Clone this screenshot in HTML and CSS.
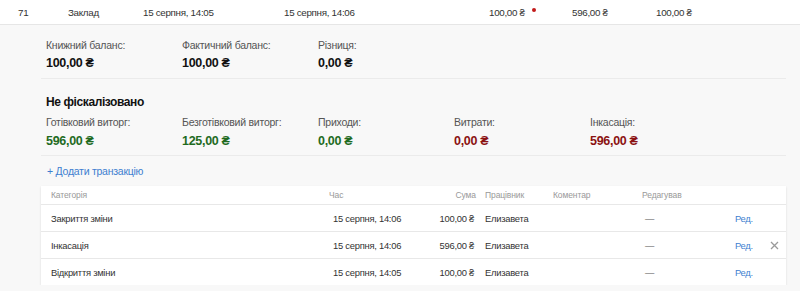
FILE: index.html
```html
<!DOCTYPE html>
<html lang="uk">
<head>
<meta charset="utf-8">
<link rel="stylesheet" href="styles.css">
</head>
<body>
<div class="toprow">
  <span class="c-id">71</span>
  <span class="c-place">Заклад</span>
  <span class="c-d1">15 серпня, 14:05</span>
  <span class="c-d2">15 серпня, 14:06</span>
  <span class="c-s1">100,00 ₴<i class="dot"></i></span>
  <span class="c-s2">596,00 ₴</span>
  <span class="c-s3">100,00 ₴</span>
</div>
<div class="details">
  <div class="stats first">
    <div class="stat"><div class="label">Книжний баланс:</div><div class="value">100,00 ₴</div></div>
    <div class="stat"><div class="label">Фактичний баланс:</div><div class="value">100,00 ₴</div></div>
    <div class="stat"><div class="label">Різниця:</div><div class="value">0,00 ₴</div></div>
  </div>
  <div class="stats second">
    <div class="heading">Не фіскалізовано</div>
    <div class="row">
      <div class="stat"><div class="label">Готівковий виторг:</div><div class="value green">596,00 ₴</div></div>
      <div class="stat"><div class="label">Безготівковий виторг:</div><div class="value green">125,00 ₴</div></div>
      <div class="stat"><div class="label">Приходи:</div><div class="value green">0,00 ₴</div></div>
      <div class="stat"><div class="label">Витрати:</div><div class="value red">0,00 ₴</div></div>
      <div class="stat"><div class="label">Інкасація:</div><div class="value red">596,00 ₴</div></div>
    </div>
  </div>
  <div class="add">+ Додати транзакцію</div>
  <div class="table">
    <div class="tr th">
      <div class="cat">Категорія</div>
      <div class="time">Час</div>
      <div class="sum">Сума</div>
      <div class="worker">Працівник</div>
      <div class="comment">Коментар</div>
      <div class="edited">Редагував</div>
      <div class="edit"></div>
      <div class="close"></div>
    </div>
    <div class="tr">
      <div class="cat">Закриття зміни</div>
      <div class="time">15 серпня, 14:06</div>
      <div class="sum">100,00 ₴</div>
      <div class="worker">Елизавета</div>
      <div class="comment"></div>
      <div class="edited">—</div>
      <div class="edit">Ред.</div>
      <div class="close"></div>
    </div>
    <div class="tr">
      <div class="cat">Інкасація</div>
      <div class="time">15 серпня, 14:06</div>
      <div class="sum">596,00 ₴</div>
      <div class="worker">Елизавета</div>
      <div class="comment"></div>
      <div class="edited">—</div>
      <div class="edit">Ред.</div>
      <div class="close"><svg width="9" height="9" viewBox="0 0 9 9"><path d="M1 1L8 8M8 1L1 8" stroke="#9a9a9a" stroke-width="1.3"/></svg></div>
    </div>
    <div class="tr">
      <div class="cat">Відкриття зміни</div>
      <div class="time">15 серпня, 14:05</div>
      <div class="sum">100,00 ₴</div>
      <div class="worker">Елизавета</div>
      <div class="comment"></div>
      <div class="edited">—</div>
      <div class="edit">Ред.</div>
      <div class="close"></div>
    </div>
  </div>
</div>
</body>
</html>
```
FILE: styles.css
```css
* { box-sizing: border-box; }
body {
  margin: 0;
  background: #f8f8f8;
  font-family: "Liberation Sans", Arial, sans-serif;
  color: #222;
}
.toprow {
  display: flex;
  align-items: center;
  height: 25px;
  padding-left: 18px;
  background: #fff;
  border-bottom: 1px solid #e6e6e6;
  font-size: 9.8px;
  letter-spacing: -0.3px;
  color: #333;
}
.toprow span { display: block; white-space: nowrap; }
.c-id { width: 50px; }
.c-place { width: 75px; }
.c-d1 { width: 141px; }
.c-d2 { width: 205px; }
.c-s1 { width: 83px; display: flex !important; align-items: center; }
.c-s2 { width: 84px; }
.dot {
  display: inline-block;
  width: 4px;
  height: 4px;
  border-radius: 50%;
  background: #c21a1a;
  margin-left: 7px;
  position: relative;
  top: -2px;
}
.details { padding: 0 14px 0 41px; }
.stats {
  border-bottom: 1px solid #ebebeb;
  padding-left: 5px;
}
.stats.first { display: flex; padding-top: 13px; padding-bottom: 7px; }
.stats.second { padding-top: 15px; padding-bottom: 6px; }
.stats .row { display: flex; }
.stat { width: 136px; }
.heading { font-size: 12px; letter-spacing: -0.4px; font-weight: bold; line-height: 16px; margin-bottom: 5px; color: #111; }
.label { font-size: 10.5px; letter-spacing: -0.25px; line-height: 14px; color: #555; }
.value { font-size: 12.5px; letter-spacing: -0.3px; font-weight: bold; line-height: 16px; margin-top: 3px; color: #111; }
.second .value { margin-top: 4px; }
.value.green { color: #1f6b1f; }
.value.red { color: #8b1212; }
.add {
  font-size: 10.5px;
  letter-spacing: -0.25px;
  line-height: 14px;
  color: #3e7fd0;
  margin: 8px 0 8px 6px;
}
.table {
  background: #fff;
  box-shadow: 0 1px 2px rgba(0,0,0,0.12);
}
.tr {
  display: grid;
  grid-template-columns: 288px 100px 47px 77px 89px 93px 35px 16px;
  align-items: center;
  height: 27px;
  border-top: 1px solid #e8e8e8;
  color: #333;
  white-space: nowrap;
  font-size: 9.4px;
  letter-spacing: -0.25px;
}
.tr.th { height: 18px; border-top: 0; color: #999; font-size: 8.5px; letter-spacing: -0.1px; }
.cat { padding-left: 10px; }
.tr:not(.th) .time { padding-left: 4px; }
.sum { text-align: right; }
.tr:not(.th) .sum { padding-right: 2px; }
.worker { padding-left: 9px; }
.tr:not(.th) .edited { padding-left: 3px; color: #555; }
.edit { color: #3e7fd0; }
.close { display: flex; align-items: center; }
```
